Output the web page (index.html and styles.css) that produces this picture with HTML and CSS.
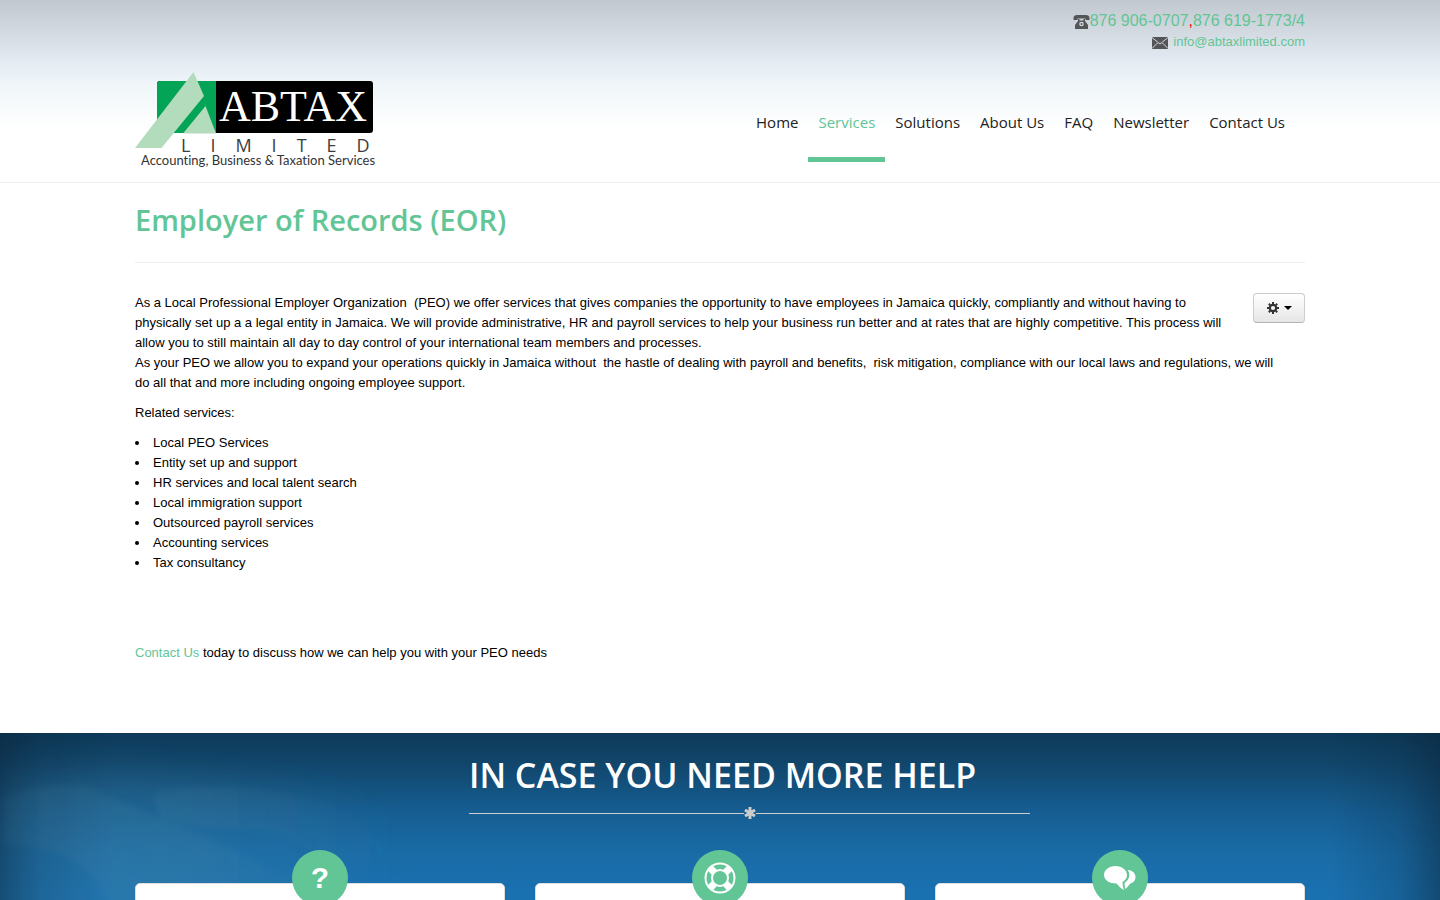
FILE: index.html
```html
<!DOCTYPE html>
<html lang="en">
<head>
    <meta charset="UTF-8">
    <meta name="viewport" content="width=device-width, initial-scale=1.0">
    <title>Employer of Records (EOR)</title>
    <link rel="stylesheet" href="styles.css">
</head>
<body>
    <header class="header">
        <div class="container">
            <div class="top-contact">
                <div class="phones">
                    <svg class="icon" width="17" height="16" viewBox="0 0 17 16" aria-hidden="true">
                        <path fill="#545557" d="M4 1h9c2 0 3.500 1 3.500 3v2h-4V4.500h-8V6h-4V4C.5 2 2 1 4 1z"/>
                        <path fill="#545557" d="M5 5h1.500v1.500h4V5H12v2l3 4v4H2v-4l3-4z"/>
                        <circle cx="8.500" cy="10" r="2.300" fill="#d3dae2"/>
                        <circle cx="8.500" cy="10" r="1" fill="#545557"/>
                    </svg><a href="tel:8769060707">876 906-0707</a><span class="comma">,</span><a href="tel:8766191773">876 619-1773/4</a>
                </div>
                <div class="email">
                    <svg class="icon" width="16" height="12" viewBox="0 0 16 12" aria-hidden="true">
                        <rect width="16" height="12" fill="#545557"/>
                        <path d="M0 .5l8 6.500 8-6.500M0 11.500l5.500-5.500M16 11.500L10.500 6" fill="none" stroke="#d3dae2"/>
                    </svg>
                    <a href="mailto:info@abtaxlimited.com">info@abtaxlimited.com</a>
                </div>
            </div>
            <div class="header-row">
                <a class="logo" href="#">
                    <svg width="280" height="98" viewBox="0 0 280 98" role="img" aria-label="ABTAX Limited">
                        <rect x="22" y="9" width="216" height="52" rx="3" fill="#000"/>
                        <path d="M25 9h56v52H22V12a3 3 0 0 1 3-3z" fill="#04a457"/>
                        <path d="M58.500 0L69 24 26.500 76H0z" fill="#b2dcbb"/>
                        <path d="M70.500 34L81 61.500H48z" fill="#b2dcbb"/>
                        <text class="logo-name" x="84" y="49">ABTAX</text>
                        <text class="logo-limited" x="46" y="80">LIMITED</text>
                        <text class="logo-tagline" x="6" y="93">Accounting, Business &amp; Taxation Services</text>
                    </svg>
                </a>
                <nav class="menu">
                    <a href="#">Home</a>
                    <a href="#" class="active">Services</a>
                    <a href="#">Solutions</a>
                    <a href="#">About Us</a>
                    <a href="#">FAQ</a>
                    <a href="#">Newsletter</a>
                    <a href="#contact">Contact Us</a>
                </nav>
            </div>
        </div>
    </header>

    <main class="container content">
        <h1>Employer of Records (EOR)</h1>
        <div class="article">
            <button type="button" class="btn-options" aria-label="Options">
                <svg width="12" height="12" viewBox="0 0 12 12" aria-hidden="true">
                    <circle cx="6" cy="6" r="3.200" fill="none" stroke="#333" stroke-width="2.200"/>
                    <path d="M6 0v2M6 10v2M0 6h2M10 6h2M1.800 1.800l1.400 1.400M8.800 8.800l1.400 1.400M10.200 1.800L8.800 3.200M3.200 8.800l-1.400 1.400" stroke="#333" stroke-width="2"/>
                </svg>
                <span class="caret"></span>
            </button>
            <p>As a Local Professional Employer Organization&nbsp; (PEO) we offer services that gives companies the opportunity to have employees in Jamaica quickly, compliantly and without having to physically set up a a legal entity in Jamaica. We will provide administrative, HR and payroll services to help your business run better and at rates that are highly competitive. This process will allow you to still maintain all day to day control of your international team members and processes.<br>
            As your PEO we allow you to expand your operations quickly in Jamaica without&nbsp; the hastle of dealing with payroll and benefits,&nbsp; risk mitigation, compliance with our local laws and regulations, we will do all that and more including ongoing employee support.</p>
            <p>Related services:</p>
            <ul>
                <li>Local PEO Services</li>
                <li>Entity set up and support</li>
                <li>HR services and local talent search</li>
                <li>Local immigration support</li>
                <li>Outsourced payroll services</li>
                <li>Accounting services</li>
                <li>Tax consultancy</li>
            </ul>
            <p class="contact-line"><a href="#contact">Contact Us</a> today to discuss how we can help you with your PEO needs</p>
        </div>
    </main>

    <section class="help" id="contact">
        <!-- faded hands behind the section -->
        <svg class="help-bg" width="480" height="300" viewBox="0 0 480 300" aria-hidden="true">
            <defs>
                <linearGradient id="fade" gradientUnits="userSpaceOnUse" x1="0" x2="400" y1="0" y2="0">
                    <stop offset="0" stop-color="#5a8fa0" stop-opacity=".08"/>
                    <stop offset=".4" stop-color="#5a8fa0" stop-opacity=".14"/>
                    <stop offset="1" stop-color="#5a8fa0" stop-opacity="0"/>
                </linearGradient>
                <filter id="soft"><feGaussianBlur stdDeviation="3"/></filter>
                <filter id="softer" x="-20%" y="-40%" width="140%" height="180%"><feGaussianBlur stdDeviation="14"/></filter>
            </defs>
            <path d="M2 40C60 30 130 35 200 40C300 45 400 60 440 120L400 200H2z" fill="url(#fade)" filter="url(#softer)"/>
            <path d="M154 60Q240 45 330 70L420 130L315 122Q290 98 250 97Q190 96 160 86z" fill="url(#fade)" filter="url(#soft)"/>
            <path d="M2 64Q50 48 90 54Q130 72 160 86Q220 106 295 150L295 300H180Q105 155 88 140Q60 110 2 112z" fill="url(#fade)" filter="url(#soft)"/>
        </svg>
        <div class="container">
            <div class="help-title">
                <h2>IN CASE YOU NEED MORE HELP</h2>
                <div class="divider">
                    <svg width="14" height="14" viewBox="0 0 14 14" aria-hidden="true">
                        <path d="M7 1v12M2 4l10 6M12 4L2 10" stroke="#ccc" stroke-width="3"/>
                    </svg>
                </div>
            </div>
            <div class="cards">
                <div class="card">
                    <span class="badge">?</span>
                </div>
                <div class="card">
                    <span class="badge">
                        <svg width="32" height="32" viewBox="0 0 32 32" fill="none" aria-hidden="true">
                            <circle cx="16" cy="16" r="14.500" stroke="#fff" stroke-width="2"/>
                            <circle cx="16" cy="16" r="8" stroke="#fff" stroke-width="2"/>
                            <path d="M5.800 5.800l4.500 4.500M21.700 21.700l4.500 4.500M26.200 5.800l-4.500 4.500M10.300 21.700l-4.500 4.500" stroke="#fff" stroke-width="7"/>
                        </svg>
                    </span>
                </div>
                <div class="card">
                    <span class="badge">
                        <svg width="32" height="26" viewBox="0 0 32 26" fill="#fff" aria-hidden="true">
                            <path d="M11.500 1C18 1 23 5 23 10c0 3-1.700 5.500-4.500 7 .2 3 .5 5.500 1.500 8-3-1.500-5.500-4-7.500-6.500C5.500 18.500 0 15 0 10S5 1 11.500 1z"/>
                            <path d="M23.500 5C28 5 31.500 8 31.500 12c0 3-2 5.800-5.500 6.700-1.200 2-2.800 3.800-4.600 5.300-.6-2-.9-4-.9-6 3-2 4.800-4.800 4.800-8 0-1.800-.6-3.600-1.800-5z"/>
                        </svg>
                    </span>
                </div>
            </div>
        </div>
    </section>
</body>
</html>
```
FILE: styles.css
```css
* {
    box-sizing: border-box;
}

body {
    margin: 0;
    font-family: "Liberation Sans", Arial, sans-serif;
    font-size: 13px;
    line-height: 20px;
    color: #000;
    background-color: #fff;
    overflow-x: hidden;
}

a {
    color: #62c595;
    text-decoration: none;
}

.container {
    width: 100%;
    max-width: 1170px;
    margin: 0 auto;
}

/* header */
.header {
    border-bottom: 1px solid #f0f0f0;
    background: linear-gradient(#c2c8d0 0, #d2d8df 30px, #e3eaf2 60px, #f0f6f9 85px, #fff 130px);
}

.top-contact {
    display: flex;
    flex-direction: column;
    align-items: flex-end;
    height: 72px;
    padding-top: 10px;
}

.phones {
    display: flex;
    align-items: center;
    font-size: 16px;
    line-height: 22px;
}

.phones .icon {
    margin-top: 2px;
}

.comma {
    color: #f00;
}

.email {
    display: flex;
    align-items: center;
    gap: 5px;
}

.email .icon {
    margin-top: 2px;
}

.header-row {
    display: flex;
    justify-content: space-between;
    height: 110px;
}

.logo svg {
    display: block;
}

.logo-name {
    font-family: "Liberation Serif", "Times New Roman", serif;
    font-size: 44px;
    fill: #fff;
}

.logo-limited {
    font-family: "Open Sans", sans-serif;
    font-size: 18px;
    letter-spacing: 20px;
    fill: #3d3d3d;
}

.logo-tagline {
    font-family: Lato, sans-serif;
    font-size: 13px;
    font-variant-ligatures: none;
    fill: #333;
}

.menu {
    display: flex;
    height: 90px;
    padding-right: 10px;
}

.menu a {
    padding: 40px 10px 0;
    border-bottom: 5px solid transparent;
    font-family: "Open Sans", sans-serif;
    font-size: 15px;
    color: #222;
}

.menu a.active {
    color: #62c595;
    border-color: #62c595;
}

/* article */
.content h1 {
    margin: 0 0 30px;
    padding: 16px 0 21px;
    border-bottom: 1px solid #eee;
    font-family: "Open Sans", sans-serif;
    font-size: 29px;
    font-weight: 600;
    line-height: 42px;
    color: #62c595;
}

.article {
    padding-bottom: 70px;
}

.article p {
    margin: 0 0 10px;
    padding-right: 15px;
}

.article ul {
    margin: 0 0 70px;
    padding-left: 15px;
}

.article li {
    padding-left: 3px;
}

.article .contact-line {
    margin: 0;
}

.btn-options {
    float: right;
    display: flex;
    align-items: center;
    justify-content: center;
    gap: 5px;
    width: 52px;
    height: 30px;
    margin-left: 10px;
    padding: 0;
    border: 1px solid #ccc;
    border-bottom-color: #b3b3b3;
    border-radius: 4px;
    background: linear-gradient(#fff, #e6e6e6);
    cursor: pointer;
}

.caret {
    border-top: 4px solid #000;
    border-left: 4px solid transparent;
    border-right: 4px solid transparent;
}

/* help section */
.help {
    position: relative;
    padding: 17px 0 40px;
    background:
        linear-gradient(to right, rgba(10, 35, 55, 0.5), rgba(10, 35, 55, 0.2) 40px, transparent 110px),
        linear-gradient(to left, rgba(10, 35, 55, 0.5), rgba(10, 35, 55, 0.2) 40px, transparent 110px),
        linear-gradient(#0d3a59 0, #11466b 30px, #165e93 80px, #196ba6 120px, #1a71b0 160px);
}

.help-bg {
    position: absolute;
    top: 0;
    left: 0;
}

.help .container {
    position: relative;
}

.help-title {
    width: 620px;
    max-width: 100%;
    margin: 0 auto;
    padding-left: 59px;
}

.help-title h2 {
    margin: 0;
    font-family: "Open Sans", sans-serif;
    font-size: 34px;
    font-weight: 600;
    line-height: 50px;
    color: #fff;
    white-space: nowrap;
}

.divider {
    display: flex;
    align-items: center;
    height: 26px;
}

.divider::before,
.divider::after {
    content: "";
    flex: 1;
    height: 1px;
    background-color: #ccc;
}

.divider svg {
    margin: 0 -1px;
}

.cards {
    display: grid;
    grid-template-columns: repeat(3, 1fr);
    gap: 30px;
    padding-top: 57px;
}

.card {
    position: relative;
    height: 240px;
    border: 1px solid #ddd;
    border-radius: 5px;
    background-color: #fff;
}

.badge {
    position: absolute;
    top: -34px;
    left: 50%;
    display: flex;
    align-items: center;
    justify-content: center;
    width: 56px;
    height: 56px;
    margin-left: -28px;
    border-radius: 50%;
    background-color: #62c595;
    font-size: 30px;
    font-weight: bold;
    color: #fff;
}
```
